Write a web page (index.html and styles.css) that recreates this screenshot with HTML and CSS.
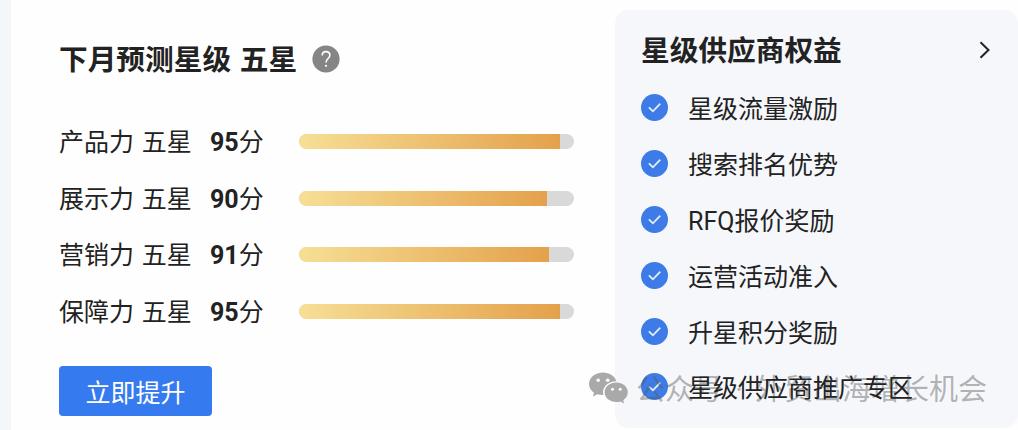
FILE: index.html
```html
<!DOCTYPE html>
<html lang="zh-CN">

<head>
    <meta charset="UTF-8">
    <title>下月预测星级</title>
    <link rel="stylesheet" href="styles.css">
</head>

<body>
    <div class="card">
        <div class="forecast">
            <div class="forecast-title">
                <h2>下月预测星级 五星</h2>
                <svg class="help" viewBox="0 0 28 28">
                    <circle cx="14" cy="14" r="13.6" fill="#858585" />
                    <path d="M10.200 10.600c0-2.400 1.500-4 3.800-4s3.900 1.500 3.900 3.700c0 3-3.900 3.500-3.900 7.200" fill="none" stroke="#fff" stroke-width="1.600" />
                    <circle cx="14" cy="20.800" r="1.100" fill="#fff" />
                </svg>
            </div>

            <div class="scores">
                <div class="score-row">
                    <span class="name">产品力 五星</span>
                    <span class="score"><b>95</b>分</span>
                    <div class="bar"><div class="fill" style="width: 95%"></div></div>
                </div>
                <div class="score-row">
                    <span class="name">展示力 五星</span>
                    <span class="score"><b>90</b>分</span>
                    <div class="bar"><div class="fill" style="width: 90%"></div></div>
                </div>
                <div class="score-row">
                    <span class="name">营销力 五星</span>
                    <span class="score"><b>91</b>分</span>
                    <div class="bar"><div class="fill" style="width: 91%"></div></div>
                </div>
                <div class="score-row">
                    <span class="name">保障力 五星</span>
                    <span class="score"><b>95</b>分</span>
                    <div class="bar"><div class="fill" style="width: 95%"></div></div>
                </div>
            </div>

            <button class="btn" type="button">立即提升</button>
        </div>

        <div class="benefits">
            <div class="benefits-title">
                <h2>星级供应商权益</h2>
                <svg class="arrow" viewBox="0 0 12 18">
                    <path d="M1.500 1.200L9.500 9L1.500 16.800" fill="none" stroke="#222" stroke-width="2" />
                </svg>
            </div>
            <ul>
                <li>
                    <svg class="check" viewBox="0 0 28 28"><circle cx="14" cy="14" r="14" /><path d="M8.200 13.800l4.200 4.200l7.600-8" /></svg>
                    <span>星级流量激励</span>
                </li>
                <li>
                    <svg class="check" viewBox="0 0 28 28"><circle cx="14" cy="14" r="14" /><path d="M8.200 13.800l4.200 4.200l7.600-8" /></svg>
                    <span>搜索排名优势</span>
                </li>
                <li>
                    <svg class="check" viewBox="0 0 28 28"><circle cx="14" cy="14" r="14" /><path d="M8.200 13.800l4.200 4.200l7.600-8" /></svg>
                    <span>RFQ报价奖励</span>
                </li>
                <li>
                    <svg class="check" viewBox="0 0 28 28"><circle cx="14" cy="14" r="14" /><path d="M8.200 13.800l4.200 4.200l7.600-8" /></svg>
                    <span>运营活动准入</span>
                </li>
                <li>
                    <svg class="check" viewBox="0 0 28 28"><circle cx="14" cy="14" r="14" /><path d="M8.200 13.800l4.200 4.200l7.600-8" /></svg>
                    <span>升星积分奖励</span>
                </li>
                <li>
                    <svg class="check" viewBox="0 0 28 28"><circle cx="14" cy="14" r="14" /><path d="M8.200 13.800l4.200 4.200l7.600-8" /></svg>
                    <span class="top">星级供应商推广专区</span>
                </li>
            </ul>
        </div>
    </div>

    <!-- watermark -->
    <div class="watermark">
        <svg class="wechat" viewBox="0 0 40 32">
            <path fill="#a9a9a9" d="M14 0.500C6.300 0.500 0 5.500 0 12c0 3.600 2 6.700 5 8.800L3.800 24.600l4.600-2.300c1.800.5 3.600.8 6 .7-2-7.200 4-13.700 13-13.700C26 4.200 20.500.5 14 .5z" />
            <path fill="#a9a9a9" d="M27.300 10.600c-6.600 0-11.700 4.300-11.700 9.700s5.100 9.800 11.700 9.800c1.500 0 2.800-.2 4.100-.6l3.800 2-1-3.300c2.800-1.900 4.600-4.700 4.600-7.900 0-5.400-5-9.700-11.500-9.700z" />
            <g fill="#fff">
                <circle cx="9.200" cy="8.300" r="1.800" />
                <circle cx="18.700" cy="8.300" r="1.800" />
                <circle cx="23.500" cy="17.300" r="1.500" />
                <circle cx="31.200" cy="17.300" r="1.500" />
            </g>
        </svg>
        <span class="account">公众号 · 外贸出海增长机会</span>
    </div>
</body>

</html>
```

FILE: styles.css
```css
* {
    margin: 0;
    padding: 0;
    box-sizing: border-box;
}

body {
    height: 430px;
    overflow: hidden;
    padding-left: 11px;
    background: #f3f7fa;
    font-family: Roboto, "Noto Sans CJK SC", sans-serif;
    font-size: 25px;
    color: #222;
}

.card {
    display: flex;
    height: 430px;
    background: #fefefe;
}

h2 {
    padding-top: 2px;
    font-size: 28.7px;
    line-height: 40px;
    font-weight: bold;
    word-spacing: 1.5px;
    white-space: nowrap;
}

.forecast {
    width: 604px;
    padding: 38px 0 0 48px;
}

.forecast-title {
    display: flex;
    align-items: center;
    gap: 15px;
}

.help {
    width: 28px;
    height: 28px;
}

.scores {
    padding-top: 33px;
}

.score-row {
    display: flex;
    align-items: center;
    height: 56.8px;
    white-space: nowrap;
}

.name,
.score {
    padding-bottom: 3px;
}

.name {
    width: 151px;
    word-spacing: 1.5px;
}

.score {
    width: 89px;
}

.bar {
    width: 275px;
    height: 15px;
    border-radius: 8px;
    background: #d9d9d9;
    overflow: hidden;
}

.fill {
    height: 100%;
    background: linear-gradient(90deg, #f6df95, #e4a14c);
}

.btn {
    display: block;
    width: 153px;
    height: 50px;
    margin-top: 26px;
    border: none;
    border-radius: 4px;
    background: #367af0;
    color: #fff;
    font-family: inherit;
    font-size: 25px;
}

.benefits {
    flex: 1;
    height: 418px;
    margin-top: 10px;
    padding: 19px 27px 0 26px;
    border-radius: 14px;
    background: #f5f7fb;
}

.benefits-title {
    display: flex;
    align-items: center;
    justify-content: space-between;
}

.arrow {
    width: 12px;
    height: 18px;
}

ul {
    list-style: none;
    padding-top: 9px;
}

li {
    display: flex;
    align-items: center;
    gap: 20px;
    height: 55.8px;
    white-space: nowrap;
}

li span {
    padding-bottom: 1px;
}

.check {
    width: 27px;
    height: 27px;
}

.check circle {
    fill: #3d7be6;
}

.check path {
    fill: none;
    stroke: #e4f1ff;
    stroke-width: 1.8;
}

/* last label stays above the watermark */
.top {
    position: relative;
    z-index: 2;
}

.watermark {
    position: absolute;
    left: 589px;
    top: 368px;
    z-index: 1;
    display: flex;
    align-items: center;
    gap: 7px;
    height: 40px;
}

.wechat {
    width: 40px;
    height: 32px;
}

.account {
    padding-bottom: 3px;
    font-size: 29px;
    font-weight: 400;
    word-spacing: 5px;
    color: rgba(90, 90, 90, 0.45);
    white-space: nowrap;
}
```
